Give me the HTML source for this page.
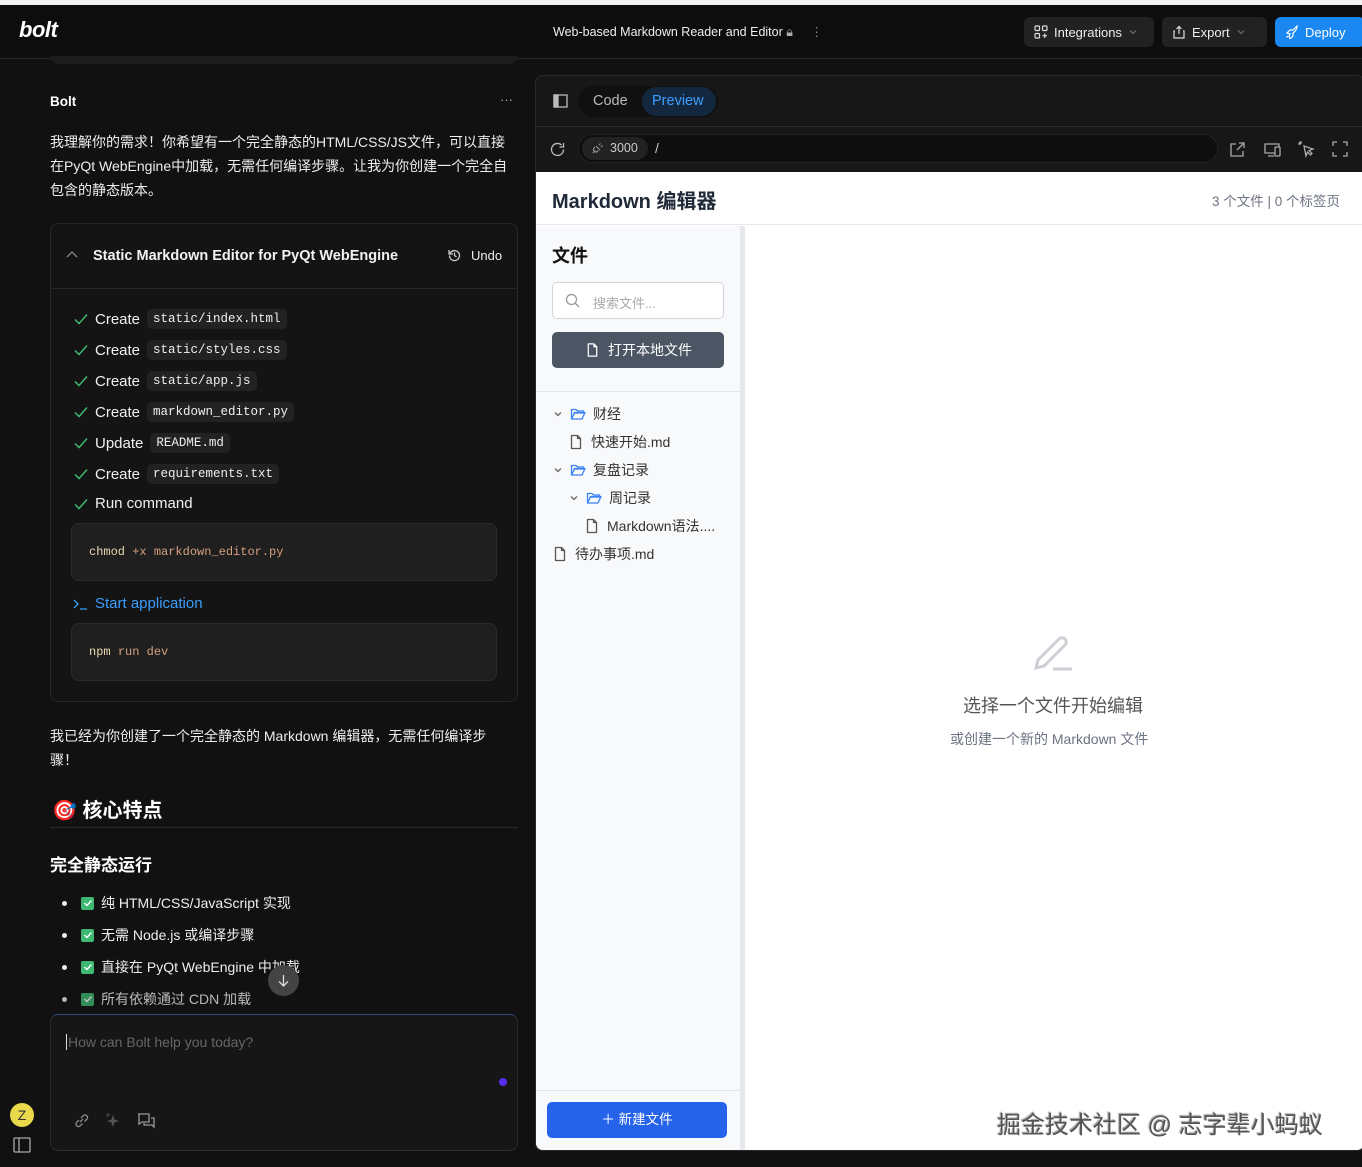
<!DOCTYPE html>
<html><head><meta charset="utf-8">
<style>
*{box-sizing:border-box;margin:0;padding:0}
body{width:1362px;height:1167px;background:#111;font-family:"Liberation Sans","Noto Sans CJK SC",sans-serif;color:#e8e8e8;position:relative;overflow:hidden}
.abs{position:absolute}
.mono{font-family:"Liberation Mono","DejaVu Sans Mono",monospace}
.top{left:0;top:0;width:1362px;height:5px;background:#f2f2f2}
.hdr{left:0;top:5px;width:1362px;height:54px;background:#0d0d0d;border-bottom:1px solid #262626}
.btn{position:absolute;top:12px;height:30px;border-radius:6px;background:#222;color:#eee;font-size:13px;display:flex;align-items:center;gap:6px;padding:0 10px}
.step{position:absolute;left:73px;display:flex;align-items:center;font-size:15px;color:#f0f0f0}
.step svg{margin-right:6px}
.code{background:#222;border-radius:5px;padding:3px 6px;font-size:12.5px;margin-left:7px;color:#eee}
.cmd{position:absolute;left:71px;width:426px;height:58px;background:#1f1f1f;border:1px solid #2a2a2a;border-radius:8px;font-size:12px;padding:21px 17px}
.li{position:absolute;left:62px;font-size:14px;display:flex;align-items:center;color:#eee}
.li .dot{width:5px;height:5px;border-radius:50%;background:#eee;margin-right:14px}
.chk{width:13px;height:13px;background:#3fb871;border-radius:2px;margin-right:7px;display:flex;align-items:center;justify-content:center}
.tree{position:absolute;font-size:14px;color:#333;display:flex;align-items:center;gap:7px}
</style></head><body>
<svg width="0" height="0" style="position:absolute"><defs>
<symbol id="ck" viewBox="0 0 16 16"><path d="M2 8.5l4 4 8-9" fill="none" stroke="#3fb871" stroke-width="1.5"/></symbol>
<symbol id="fd" viewBox="0 0 16 16"><path d="M1.5 3.5h4.5l1.5 1.5h6v2H4.5L1.5 13zM1.5 13l3-6.5h10.5l-3 6.5z" fill="none" stroke="#3b82f6" stroke-width="1.3" stroke-linejoin="round"/></symbol>
<symbol id="fl" viewBox="0 0 16 16"><path d="M3.5 1.5h6l3 3v10h-9z M9.5 1.5v3h3" fill="none" stroke="#555" stroke-width="1.3" stroke-linejoin="round"/></symbol>
<symbol id="cv" viewBox="0 0 10 10"><path d="M2 3.5l3 3 3-3" fill="none" stroke="#666" stroke-width="1.3"/></symbol>
</defs></svg>
<div class="abs top"></div>
<div class="abs hdr">
  <div class="abs" style="left:19px;top:12px;font-size:22px;font-weight:bold;font-style:italic;color:#fff;letter-spacing:-0.5px">bolt</div>
  <div class="abs" style="left:553px;top:19px;font-size:12.5px;color:#eee">Web-based Markdown Reader and Editor <span style="color:#aaa">&#128274;&#xFE0E;</span> <span style="margin-left:14px;color:#888">⋮</span></div>
  <div class="btn" style="left:1024px;width:130px"><svg width="14" height="14" viewBox="0 0 14 14" fill="none" stroke="#ddd" stroke-width="1.2"><rect x="1" y="1" width="4.5" height="4.5" rx="1"/><rect x="8.5" y="1" width="4.5" height="4.5" rx="1"/><rect x="1" y="8.5" width="4.5" height="4.5" rx="1"/><path d="M10.7 8.5v4.5M8.5 10.7h4.5"/></svg>Integrations <svg width="10" height="10"><use href="#cv"/></svg></div>
  <div class="btn" style="left:1162px;width:105px"><svg width="14" height="14" viewBox="0 0 14 14" fill="none" stroke="#ddd" stroke-width="1.2"><path d="M7 9V1.5M4.5 4L7 1.5 9.5 4M3 6H2v7h10V6h-1"/></svg>Export <svg width="10" height="10"><use href="#cv"/></svg></div>
  <div class="btn" style="left:1275px;width:90px;background:#1a88f0;color:#fff"><svg width="14" height="14" viewBox="0 0 14 14" fill="none" stroke="#fff" stroke-width="1.2"><path d="M5 9L2 8l3-3h3l4-4c0 3-1 5-4 7v3l-3 3-1-3zM3 11l-1.5 1.5"/></svg>Deploy</div>
</div>
<div class="abs" style="left:50px;top:56px;width:468px;height:8px;background:#1c1c1c;border-radius:0 0 8px 8px"></div>
<div class="abs" style="left:50px;top:94px;font-size:13.5px;font-weight:bold;color:#fff">Bolt</div>
<div class="abs" style="left:500px;top:92px;font-size:13px;color:#aaa">···</div>
<div class="abs" style="left:50px;top:130px;width:464px;font-size:14px;line-height:24px;color:#eee">我理解你的需求！你希望有一个完全静态的HTML/CSS/JS文件，可以直接在PyQt WebEngine中加载，无需任何编译步骤。让我为你创建一个完全自包含的静态版本。</div>
<div class="abs" style="left:50px;top:223px;width:468px;height:479px;background:#141414;border:1px solid #262626;border-radius:8px">
  <div style="height:65px;border-bottom:1px solid #262626;position:relative">
    <svg class="abs" style="left:15px;top:26px" width="12" height="10" viewBox="0 0 12 10"><path d="M1 7l5-5 5 5" fill="none" stroke="#888" stroke-width="1.3"/></svg>
    <div class="abs" style="left:42px;top:24px;font-size:14.5px;font-weight:bold;color:#f2f2f2">Static Markdown Editor for PyQt WebEngine</div>
    <svg class="abs" style="left:396px;top:24px" width="15" height="15" viewBox="0 0 15 15" fill="none" stroke="#ccc" stroke-width="1.3"><path d="M2.5 7.5a5 5 0 1 0 1.5-3.5L2 6M2 2v4h4M7.5 4.5v3l2 1.5"/></svg>
    <div class="abs" style="left:420px;top:24px;font-size:13px;color:#eee">Undo</div>
  </div>
</div>
<div class="step" style="top:309px"><svg width="16" height="16"><use href="#ck"/></svg>Create<span class="code mono">static/index.html</span></div>
<div class="step" style="top:340px"><svg width="16" height="16"><use href="#ck"/></svg>Create<span class="code mono">static/styles.css</span></div>
<div class="step" style="top:371px"><svg width="16" height="16"><use href="#ck"/></svg>Create<span class="code mono">static/app.js</span></div>
<div class="step" style="top:402px"><svg width="16" height="16"><use href="#ck"/></svg>Create<span class="code mono">markdown_editor.py</span></div>
<div class="step" style="top:433px"><svg width="16" height="16"><use href="#ck"/></svg>Update<span class="code mono">README.md</span></div>
<div class="step" style="top:464px"><svg width="16" height="16"><use href="#ck"/></svg>Create<span class="code mono">requirements.txt</span></div>
<div class="step" style="top:495px"><svg width="16" height="16"><use href="#ck"/></svg>Run command</div>
<div class="cmd mono" style="top:523px"><span style="color:#e8d8b0">chmod</span> <span style="color:#d7a080">+x markdown_editor.py</span></div>
<div class="step" style="top:595px;color:#3b9eff"><svg width="16" height="14" viewBox="0 0 16 14" fill="none" stroke="#3b9eff" stroke-width="1.3"><path d="M1 3l4 4-4 4M7 12h7"/></svg>Start application</div>
<div class="cmd mono" style="top:623px"><span style="color:#e8d8b0">npm</span> <span style="color:#d7a080">run dev</span></div>
<div class="abs" style="left:50px;top:724px;width:460px;font-size:14px;line-height:24px;color:#eee">我已经为你创建了一个完全静态的 Markdown 编辑器，无需任何编译步骤！</div>
<div class="abs" style="left:52px;top:794px;font-size:20px;font-weight:bold;color:#fff">🎯 核心特点</div>
<div class="abs" style="left:50px;top:827px;width:468px;height:1px;background:#2a2a2a"></div>
<div class="abs" style="left:50px;top:851px;font-size:17px;font-weight:bold;color:#fff">完全静态运行</div>
<div class="li" style="top:893px"><span class="dot"></span><span class="chk"><svg width="10" height="10"><path d="M1.5 5l2.5 2.5 4.5-5" stroke="#fff" fill="none" stroke-width="1.4"/></svg></span>纯 HTML/CSS/JavaScript 实现</div>
<div class="li" style="top:925px"><span class="dot"></span><span class="chk"><svg width="10" height="10"><path d="M1.5 5l2.5 2.5 4.5-5" stroke="#fff" fill="none" stroke-width="1.4"/></svg></span>无需 Node.js 或编译步骤</div>
<div class="li" style="top:957px"><span class="dot"></span><span class="chk"><svg width="10" height="10"><path d="M1.5 5l2.5 2.5 4.5-5" stroke="#fff" fill="none" stroke-width="1.4"/></svg></span>直接在 PyQt WebEngine 中加载</div>
<div class="li" style="top:989px;opacity:.75"><span class="dot"></span><span class="chk"><svg width="10" height="10"><path d="M1.5 5l2.5 2.5 4.5-5" stroke="#fff" fill="none" stroke-width="1.4"/></svg></span>所有依赖通过 CDN 加载</div>
<div class="abs" style="left:268px;top:965px;width:31px;height:31px;border-radius:50%;background:#444"><svg class="abs" style="left:8px;top:8px" width="15" height="15" viewBox="0 0 15 15" fill="none" stroke="#ddd" stroke-width="1.3"><path d="M7.5 2v11M3 8.5l4.5 4.5 4.5-4.5"/></svg></div>
<div class="abs" style="left:50px;top:1014px;width:468px;height:137px;background:#161616;border:1px solid #2c2c2c;border-top-color:#2a4a70;border-radius:8px">
  <div class="abs" style="left:15px;top:19px;font-size:14px;color:#666;border-left:1px solid #ddd;padding-left:1px">How can Bolt help you today?</div>
  <div class="abs" style="left:448px;top:63px;width:8px;height:8px;border-radius:50%;background:#5a2cf0"></div>
  <svg class="abs" style="left:22px;top:97px" width="17" height="17" viewBox="0 0 17 17" fill="none" stroke="#888" stroke-width="1.3"><path d="M7 10l3-3M6 8l-2.5 2.5a2.5 2.5 0 0 0 3.5 3.5L9.5 11.5M8 6l2.5-2.5a2.5 2.5 0 0 1 3.5 3.5L11.5 9.5"/></svg>
  <svg class="abs" style="left:54px;top:97px" width="17" height="17" viewBox="0 0 17 17" fill="#555"><path d="M8 3l1.5 4.5L14 9l-4.5 1.5L8 15l-1.5-4.5L2 9l4.5-1.5z"/><path d="M3 1l.6 1.4L5 3l-1.4.6L3 5l-.6-1.4L1 3l1.4-.6z"/></svg>
  <svg class="abs" style="left:86px;top:97px" width="18" height="18" viewBox="0 0 18 18" fill="none" stroke="#999" stroke-width="1.3"><path d="M1 2h11v8H5l-3 2V2zM14 6h3v9l-2-2H7v-2"/></svg>
</div>
<div class="abs" style="left:10px;top:1103px;width:24px;height:24px;border-radius:50%;background:#e8d84a;color:#333;text-align:center;line-height:24px;font-size:14px">Z</div>
<svg class="abs" style="left:13px;top:1137px" width="18" height="16" viewBox="0 0 18 16" fill="none" stroke="#aaa" stroke-width="1.3"><rect x="1" y="1" width="16" height="14" rx="1"/><path d="M6 1v14"/></svg>

<div class="abs" style="left:535px;top:75px;width:830px;height:1076px;background:#171717;border:1px solid #2a2a2a;border-radius:8px;overflow:hidden">
  <div style="height:51px;border-bottom:1px solid #2a2a2a;position:relative">
    <svg class="abs" style="left:17px;top:18px" width="15" height="14" viewBox="0 0 15 14" fill="none" stroke="#bbb" stroke-width="1.3"><rect x="1" y="1" width="13" height="12"/><rect x="1" y="1" width="4" height="12" fill="#bbb"/></svg>
    <div class="abs" style="left:42px;top:10px;height:31px;width:140px;background:#101010;border-radius:16px"></div>
    <div class="abs" style="left:57px;top:17px;font-size:14.5px;color:#bbb">Code</div>
    <div class="abs" style="left:106px;top:11px;width:74px;height:29px;border-radius:15px;background:#13283f"></div>
    <div class="abs" style="left:116px;top:17px;font-size:14.5px;color:#3b9eff">Preview</div>
  </div>
  <div style="height:45px;position:relative">
    <svg class="abs" style="left:13px;top:14px" width="17" height="17" viewBox="0 0 17 17" fill="none" stroke="#bbb" stroke-width="1.3"><path d="M14.5 8.5a6 6 0 1 1-2-4.5M14.5 2v4h-4"/></svg>
    <div class="abs" style="left:42px;top:7px;width:640px;height:29px;border-radius:15px;background:#0e0e0e;border:1px solid #222"></div>
    <div class="abs" style="left:46px;top:10px;width:66px;height:23px;border-radius:12px;background:#222"></div>
    <svg class="abs" style="left:55px;top:15px" width="13" height="13" viewBox="0 0 13 13" fill="none" stroke="#999" stroke-width="1.1"><path d="M2 11l2.5-2.5M5 4l4 4M4 5l-1 1a2.5 2.5 0 0 0 3.5 3.5L7.5 8.5M8 3l1.5-1.5M10 5l1.5-1.5"/></svg>
    <div class="abs" style="left:74px;top:14px;font-size:12.5px;color:#ccc">3000</div>
    <div class="abs" style="left:119px;top:13px;font-size:14px;color:#ccc">/</div>
    <svg class="abs" style="left:693px;top:14px" width="17" height="17" viewBox="0 0 17 17" fill="none" stroke="#aaa" stroke-width="1.3"><path d="M7 3H2v12h12v-5M10 2h5v5M15 2L8 9"/></svg>
    <svg class="abs" style="left:727px;top:14px" width="19" height="17" viewBox="0 0 19 17" fill="none" stroke="#aaa" stroke-width="1.3"><path d="M12 12H2V3h14v3M5 15h6"/><rect x="12" y="6" width="5" height="9" rx="1"/></svg>
    <svg class="abs" style="left:761px;top:13px" width="18" height="18" viewBox="0 0 18 18" fill="none" stroke="#aaa" stroke-width="1.3"><path d="M7 6l9 3-4 1.5 3 3-1.5 1.5-3-3L9 16z M4 1v3M1 4h3M2 2l2 2"/></svg>
    <svg class="abs" style="left:796px;top:14px" width="16" height="16" viewBox="0 0 16 16" fill="none" stroke="#aaa" stroke-width="1.3"><path d="M1 5V1h4M11 1h4v4M15 11v4h-4M5 15H1v-4"/></svg>
  </div>
  <div class="abs" style="left:0;top:96px;width:830px;height:980px;background:#fff">
    <div style="height:53px;border-bottom:1px solid #e5e7eb;position:relative">
      <div class="abs" style="left:16px;top:13px;font-size:20px;font-weight:bold;color:#1f2937">Markdown 编辑器</div>
      <div class="abs" style="left:676px;top:18px;font-size:13.5px;color:#6b7280">3 个文件 | 0 个标签页</div>
    </div>
    <div class="abs" style="left:0;top:54px;width:209px;height:926px;background:#f8f9fb;border-right:5px solid #e5e7eb">
      <div class="abs" style="left:16px;top:16px;font-size:18px;font-weight:bold;color:#111">文件</div>
      <div class="abs" style="left:16px;top:56px;width:172px;height:37px;border:1px solid #d1d5db;border-radius:5px;background:#fff">
        <svg class="abs" style="left:12px;top:10px" width="15" height="15" viewBox="0 0 15 15" fill="none" stroke="#999" stroke-width="1.3"><circle cx="6.5" cy="6.5" r="5"/><path d="M10 10l4 4"/></svg>
        <div class="abs" style="left:40px;top:10px;font-size:13px;color:#aaa">搜索文件...</div>
      </div>
      <div class="abs" style="left:16px;top:106px;width:172px;height:36px;border-radius:5px;background:#4b5563;color:#fff;font-size:14px;line-height:36px">
        <svg class="abs" style="left:33px;top:10px" width="15" height="16" viewBox="0 0 16 16"><path d="M3.5 1.5h6l3 3v10h-9z M9.5 1.5v3h3" fill="none" stroke="#fff" stroke-width="1.3" stroke-linejoin="round"/></svg>
        <span class="abs" style="left:56px;top:0">打开本地文件</span></div>
      <div class="abs" style="left:0;top:165px;width:204px;height:1px;background:#e5e7eb"></div>
      <div class="tree" style="left:17px;top:178px"><svg width="10" height="10"><use href="#cv"/></svg><svg width="16" height="16"><use href="#fd"/></svg> 财经</div>
      <div class="tree" style="left:32px;top:206px"><svg width="16" height="16"><use href="#fl"/></svg>快速开始.md</div>
      <div class="tree" style="left:17px;top:234px"><svg width="10" height="10"><use href="#cv"/></svg><svg width="16" height="16"><use href="#fd"/></svg> 复盘记录</div>
      <div class="tree" style="left:33px;top:262px"><svg width="10" height="10"><use href="#cv"/></svg><svg width="16" height="16"><use href="#fd"/></svg> 周记录</div>
      <div class="tree" style="left:48px;top:290px"><svg width="16" height="16"><use href="#fl"/></svg>Markdown语法....</div>
      <div class="tree" style="left:16px;top:318px"><svg width="16" height="16"><use href="#fl"/></svg>待办事项.md</div>
      <div class="abs" style="left:0;top:864px;width:204px;height:1px;background:#e5e7eb"></div>
      <div class="abs" style="left:11px;top:876px;width:180px;height:36px;border-radius:5px;background:#2563eb;color:#fff;font-size:13.5px;text-align:center;line-height:36px">＋ 新建文件</div>
    </div>
    <svg class="abs" style="left:497px;top:460px" width="42" height="40" viewBox="0 0 42 40" fill="none" stroke="#ccd0d5" stroke-width="3"><path d="M3 36l2-8L26 7a4 4 0 016 6L11 34z"/><path d="M20 37h19"/></svg>
    <div class="abs" style="left:427px;top:520px;font-size:18px;color:#555">选择一个文件开始编辑</div>
    <div class="abs" style="left:414px;top:557px;font-size:14px;color:#6b7280">或创建一个新的 Markdown 文件</div>
    <div class="abs" style="left:461px;top:933px;font-size:24px;color:#555;text-shadow:1px 1px 1px #fff,-1px -1px 1px #999">掘金技术社区 @ 志字辈小蚂蚁</div>
  </div>
</div>
</body></html>
